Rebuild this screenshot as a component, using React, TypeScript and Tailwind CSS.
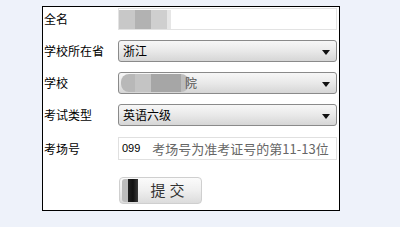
import React from 'react';

const font = { fontFamily: '"Noto Sans CJK SC", "Liberation Sans", sans-serif' };

const Arrow = () => (
  <svg width="8" height="5" viewBox="0 0 8 5" className="absolute right-[6px] top-[9px]">
    <path d="M0 0h8L4 5z" fill="#111" />
  </svg>
);

const Select: React.FC<{ children?: React.ReactNode }> = ({ children }) => (
  <div className="relative h-[22px] w-[219px] rounded-[3px] border border-[#8a8a8a] bg-gradient-to-b from-[#f7f7f7] via-[#e9e9e9] to-[#d6d6d6] pl-[4px] text-[12px] leading-[20px] text-black">
    {children}
    <Arrow />
  </div>
);

const Row: React.FC<{ label: string; children: React.ReactNode; className?: string }> = ({ label, children, className }) => (
  <div className={`flex items-center ${className ?? ''}`}>
    <div className="w-[74px] text-[12px] text-black">{label}</div>
    {children}
  </div>
);

export default function App() {
  return (
    <div className="h-[227px] w-[400px] bg-[#eef2fa] pl-[42px] pt-[6px]" style={font}>
      <div className="h-[205px] w-[298px] border border-black bg-white pl-[1px] pt-[1px]">
        <Row label="全名">
          <div className="relative h-[22px] w-[219px] border border-[#e3e3e3] bg-white">
            <div className="absolute left-[0px] top-[1px] flex h-[19px]">
              <div className="w-[16px] bg-[#c8c8c8]" />
              <div className="w-[16px] bg-[#b2b2b2]" />
              <div className="w-[16px] bg-[#cfcfcf]" />
              <div className="w-[4px] bg-[#e6e6e6]" />
            </div>
          </div>
        </Row>
        <Row label="学校所在省" className="mt-[10px]">
          <Select>浙江</Select>
        </Row>
        <Row label="学校" className="mt-[10px]">
          <Select>
            <div className="absolute left-[2px] top-[1px] flex h-[18px] overflow-hidden rounded-[8px]">
              <div className="w-[14px] bg-[#b8b8b8]" />
              <div className="w-[16px] bg-[#c4c4c4]" />
              <div className="w-[30px] bg-[#a6a6a6]" />
              <div className="w-[8px] bg-[#bdbdbd]" />
            </div>
            <span className="absolute left-[66px] top-0 text-[#555]">院</span>
          </Select>
        </Row>
        <Row label="考试类型" className="mt-[10px]">
          <Select>英语六级</Select>
        </Row>
        <Row label="考场号" className="mt-[11px]">
          <div className="flex h-[23px] w-[219px] items-center border border-[#e0e0e0] bg-white pl-[3px]">
            <span className="text-[11px] text-black" style={{ fontFamily: '"Liberation Sans", sans-serif' }}>099</span>
            <span className="ml-[12px] text-[13px] text-[#666]">考场号为准考证号的第11-13位</span>
          </div>
        </Row>
        <div className="ml-[75px] mt-[17px] flex h-[27px] w-[83px] items-center overflow-hidden rounded-[4px] border border-[#cfcfcf] bg-gradient-to-b from-[#fbfbfb] via-[#efefef] to-[#dcdcdc]">
          <div className="ml-[2px] h-[23px] w-[6px] rounded-l-[3px] bg-[#bdbdbd]" />
          <div className="h-[23px] w-[10px] bg-gradient-to-r from-[#222] via-[#111] to-[#3a3a3a]" />
          <div className="flex-1 text-center text-[15px] tracking-[4px] text-[#333]">提交</div>
        </div>
      </div>
    </div>
  );
}
